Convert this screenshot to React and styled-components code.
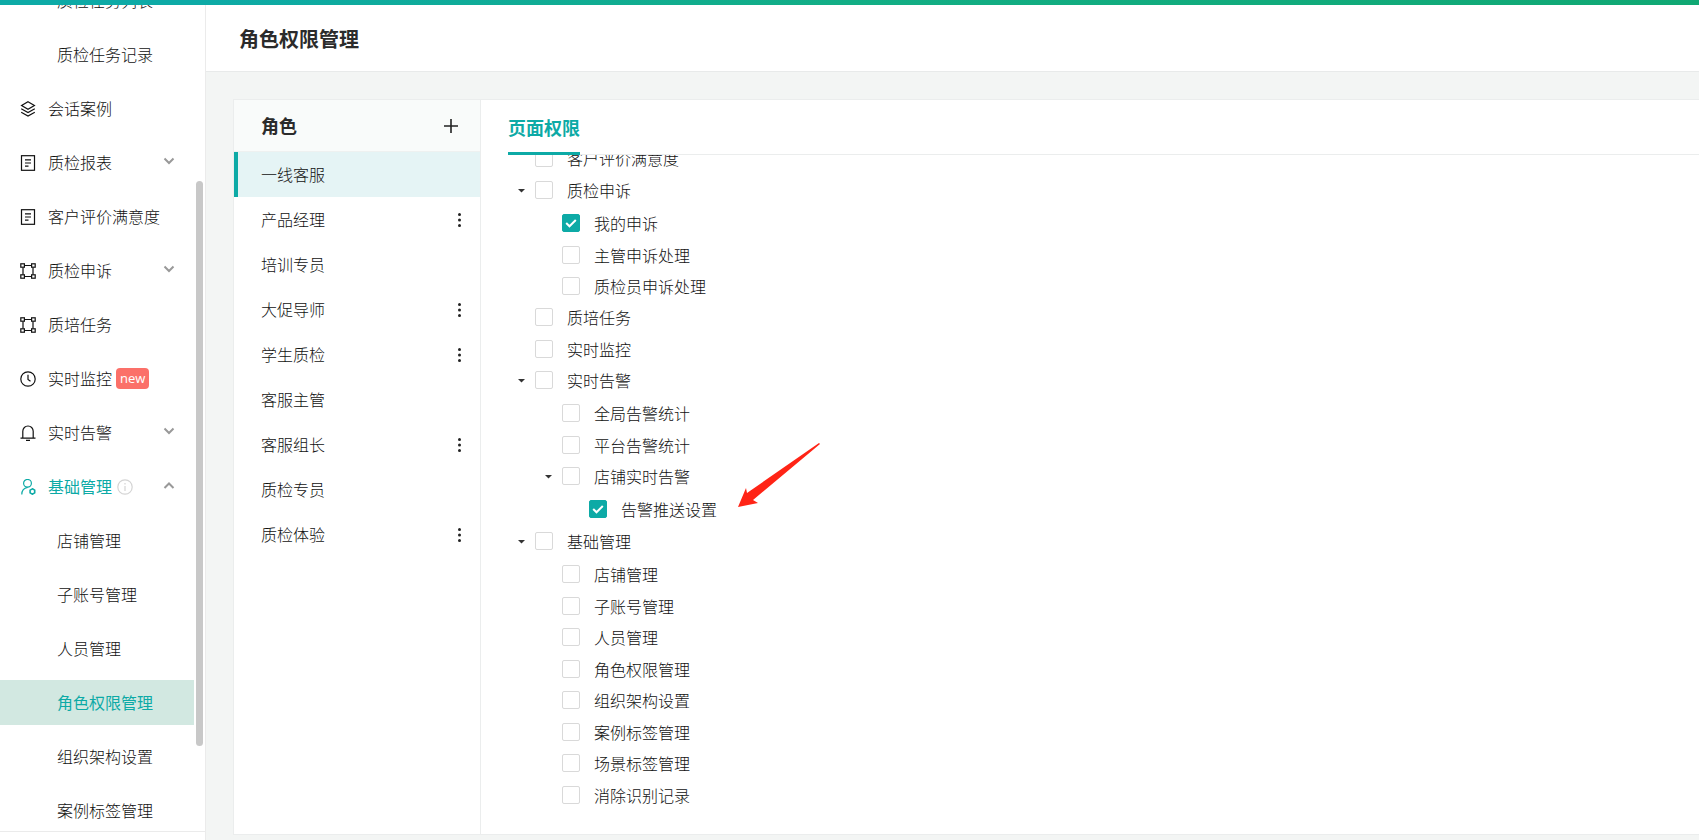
import React, { useState } from 'react';
import styled, { createGlobalStyle } from 'styled-components';

const GlobalStyle = createGlobalStyle`
    * { box-sizing: border-box; }
    body {
        margin: 0;
        background: #f3f5f4;
        color: #111;
        font-family: "Open Sans", "Noto Sans CJK SC", sans-serif;
        font-size: 16px;
        font-weight: 300;
        line-height: 24px;
    }
    ul { list-style: none; margin: 0; padding: 0; }
    button { font: inherit; color: inherit; border: 0; padding: 0; background: none; cursor: pointer; }
    h1, h2 { margin: 0; color: #2b2b2b; }
`;

const Page = styled.div`
    height: 100vh;
    display: flex;
    flex-direction: column;
    overflow: hidden;
`;

const TopBar = styled.div`
    flex: none;
    height: 5px;
    background: linear-gradient(90deg, #0daaa6 12%, #12ae85 50%, #10a873);
`;

const Body = styled.div`
    flex: 1;
    min-height: 0;
    display: flex;
`;

const Sidebar = styled.aside`
    position: relative;
    flex: none;
    width: 206px;
    display: flex;
    flex-direction: column;
    background: #fff;
    border-right: 1px solid #ebebeb;
`;

const Nav = styled.nav`
    flex: 1;
    min-height: 0;
    overflow: hidden;
    ul { margin-top: -27px; }
    li { margin-bottom: 9px; }
`;

const SidebarFoot = styled.div`
    flex: none;
    height: 9px;
    border-top: 1px solid #ebebeb;
`;

const ScrollThumb = styled.div`
    position: absolute;
    top: 176px;
    right: 2px;
    width: 7px;
    height: 565px;
    border-radius: 4px;
    background: #c8c8c8;
`;

const NavLink = styled.a`
    display: flex;
    align-items: center;
    width: 194px;
    height: 45px;
    padding: 0 18px 0 ${props => (props.$sub ? 57 : 20)}px;
    background: ${props => (props.$active ? '#d2e8e1' : 'transparent')};
    color: ${props => (props.$active || props.$open ? '#0daaa6' : 'inherit')};
    font-weight: ${props => (props.$active || props.$open ? 400 : 300)};
    text-decoration: none;
    > svg:first-child { margin-right: 12px; }
`;

const NewBadge = styled.span`
    margin-left: 4px;
    padding: 0 4px;
    border-radius: 4px;
    background: #fb7069;
    color: #fff;
    font-size: 13px;
    font-weight: 400;
    line-height: 21px;
`;

const InfoIcon = styled.svg`
    margin-left: 5px;
`;

const Chevron = styled.svg`
    margin: 0 1px 3px auto;
`;

const Main = styled.main`
    flex: 1;
    min-width: 0;
    display: flex;
    flex-direction: column;
`;

const Header = styled.header`
    flex: none;
    height: 67px;
    padding: 3px 33px 0;
    display: flex;
    align-items: center;
    background: #fff;
    border-bottom: 1px solid #e8eaea;
    h1 { font-size: 20px; line-height: 30px; font-weight: 700; }
`;

const Card = styled.section`
    flex: 1;
    min-height: 0;
    margin: 27px 0 5px 27px;
    display: flex;
    background: #fff;
    border: 1px solid #ebeded;
    border-right: 0;
`;

const Roles = styled.div`
    flex: none;
    width: 247px;
    border-right: 1px solid #ebeded;
`;

const RolesHead = styled.div`
    display: flex;
    align-items: center;
    justify-content: space-between;
    height: 52px;
    padding: 0 22px 0 27px;
    background: #f9fbfa;
    border-bottom: 1px solid #eef1f0;
    h2 { font-size: 18px; font-weight: 700; }
    svg { display: block; }
`;

const Role = styled.li`
    display: flex;
    align-items: center;
    height: 45px;
    padding-right: 18px;
    border-left: 4px solid ${props => (props.$active ? '#0daaa6' : 'transparent')};
    background: ${props => (props.$active ? '#e5f4f5' : 'transparent')};
    svg { display: block; }
`;

const RoleName = styled.button`
    flex: 1;
    height: 45px;
    padding-left: 23px;
    text-align: left;
`;

const Permissions = styled.div`
    flex: 1;
    min-width: 0;
    padding-left: 27px;
    display: flex;
    flex-direction: column;
`;

const Tabs = styled.div`
    flex: none;
    display: flex;
    height: 55px;
    border-bottom: 1px solid #ebeded;
`;

const Tab = styled.button`
    && {
        height: 55px;
        padding-top: 4px;
        border-bottom: 3px solid #0daaa6;
        color: #0daaa6;
        font-size: 18px;
        font-weight: 700;
    }
`;

const TreeView = styled.div`
    flex: 1;
    min-height: 0;
    overflow: hidden;
    > ul { margin-top: -12px; }
`;

const Branch = styled.ul`
    && { padding-left: ${props => (props.$nested ? 27 : 0)}px; }
    && { padding-top: ${props => (props.$nested ? 2 : 0)}px; }
    > li:nth-child(even) { margin-top: 1px; }
`;

const TreeRow = styled.div`
    position: relative;
    display: flex;
    align-items: center;
    height: 31px;
    label { display: flex; align-items: center; gap: 14px; }
`;

const Toggle = styled.button`
    width: 27px;
    height: 24px;
    display: flex;
    align-items: center;
    justify-content: center;
`;

const Spacer = styled.span`
    width: 27px;
`;

const Checkbox = styled.input`
    appearance: none;
    flex: none;
    width: 18px;
    height: 18px;
    margin: 0 0 2px;
    border: 1px solid #d9d9d9;
    border-radius: 2px;
    background: #fff;
    &:checked {
        border-color: #0daaa6;
        background: #0daaa6 url("data:image/svg+xml,%3Csvg xmlns='http://www.w3.org/2000/svg' viewBox='0 0 16 16'%3E%3Cpath d='M3.2 8l3.3 3.3L12.8 5' fill='none' stroke='white' stroke-width='2'/%3E%3C/svg%3E") center / 16px no-repeat;
    }
`;

const Arrow = styled.svg`
    position: absolute;
    left: 175px;
    top: -53px;
`;

const icons = {
    layers: <><path d="M8 .8l6.4 3.7L8 8.2 1.6 4.5z" /><path d="M1.2 7.8L8 11.6l6.8-3.8M1.2 11.2L8 15l6.8-3.8" /></>,
    report: <><rect x="1.5" y=".7" width="13" height="14.6" /><path d="M5 4.8h6M5 8h6M5 11.2h3.5" /></>,
    frame: <><path d="M4.3 2.5h7.4M4.3 13.5h7.4M3 4.5v7M13 4.5v7" /><rect x=".8" y=".8" width="3.6" height="3.4" /><rect x="11.6" y=".8" width="3.6" height="3.4" /><rect x=".8" y="11.8" width="3.6" height="3.4" /><rect x="11.6" y="11.8" width="3.6" height="3.4" /></>,
    clock: <><circle cx="8" cy="8" r="7.2" /><path d="M8 3.8v4.7l2.5 1.8" /></>,
    bell: <><path d="M.5 13.2h15M2.8 13.2V6.2a5.2 5.2 0 0 1 10.4 0v7M6 15.4h4" /></>,
    user: <><circle cx="7.5" cy="4.3" r="3.9" /><path d="M1.8 15.6c0-3.9 2.2-6.6 5.9-7.2" /><path d="M12.4 9.8l2.3 1.3v2.8l-2.3 1.3-2.3-1.3v-2.8z" strokeWidth="1.6" /></>,
};

const Icon = ({ name }) => (
    <svg width="16" height="16" viewBox="0 0 16 16" fill="none" stroke="currentColor" strokeWidth="1.2" aria-hidden="true">
        {icons[name]}
    </svg>
);

const menu = [
    { text: '质检任务列表', sub: true },
    { text: '质检任务记录', sub: true },
    { text: '会话案例', icon: 'layers' },
    { text: '质检报表', icon: 'report', arrow: 'down' },
    { text: '客户评价满意度', icon: 'report' },
    { text: '质检申诉', icon: 'frame', arrow: 'down' },
    { text: '质培任务', icon: 'frame' },
    { text: '实时监控', icon: 'clock', badge: 'new' },
    { text: '实时告警', icon: 'bell', arrow: 'down' },
    { text: '基础管理', icon: 'user', arrow: 'up', info: true, open: true },
    { text: '店铺管理', sub: true },
    { text: '子账号管理', sub: true },
    { text: '人员管理', sub: true },
    { text: '角色权限管理', sub: true, active: true },
    { text: '组织架构设置', sub: true },
    { text: '案例标签管理', sub: true },
];

const roles = [
    { name: '一线客服' },
    { name: '产品经理', more: true },
    { name: '培训专员' },
    { name: '大促导师', more: true },
    { name: '学生质检', more: true },
    { name: '客服主管' },
    { name: '客服组长', more: true },
    { name: '质检专员' },
    { name: '质检体验', more: true },
];

const tree = [
    { text: '客户评价满意度' },
    { text: '质检申诉', children: [
        { text: '我的申诉', checked: true },
        { text: '主管申诉处理' },
        { text: '质检员申诉处理' },
    ] },
    { text: '质培任务' },
    { text: '实时监控' },
    { text: '实时告警', children: [
        { text: '全局告警统计' },
        { text: '平台告警统计' },
        { text: '店铺实时告警', children: [
            { text: '告警推送设置', checked: true, marked: true },
        ] },
    ] },
    { text: '基础管理', children: [
        { text: '店铺管理' },
        { text: '子账号管理' },
        { text: '人员管理' },
        { text: '角色权限管理' },
        { text: '组织架构设置' },
        { text: '案例标签管理' },
        { text: '场景标签管理' },
        { text: '消除识别记录' },
    ] },
];

const TreeNode = ({ node }) => {
    const [open, setOpen] = useState(true);
    return (
        <li>
            <TreeRow>
                {node.children ? (
                    <Toggle aria-label={node.text} aria-expanded={open} onClick={() => setOpen(!open)}>
                        <svg width="7" height="4" viewBox="0 0 7 4"><path d="M0 0h7L3.5 3.6z" fill="#333" /></svg>
                    </Toggle>
                ) : <Spacer />}
                <label>
                    <Checkbox type="checkbox" defaultChecked={node.checked} />
                    {node.text}
                </label>
                {node.marked && (
                    <Arrow width="84" height="68" viewBox="0 0 84 68" aria-hidden="true">
                        <path d="M1 66L9 47l1 5L82 2l1 1-67 56 5 3z" fill="#ff2416" />
                    </Arrow>
                )}
            </TreeRow>
            {node.children && open && <Tree nodes={node.children} nested />}
        </li>
    );
};

const Tree = ({ nodes, nested }) => (
    <Branch $nested={nested}>
        {nodes.map(node => <TreeNode key={node.text} node={node} />)}
    </Branch>
);

const App = () => {
    const [current, setCurrent] = useState('一线客服');
    return (
        <Page>
            <GlobalStyle />
            <TopBar />
            <Body>
                <Sidebar>
                    <Nav>
                        <ul>
                            {menu.map(item => (
                                <li key={item.text}>
                                    <NavLink href="#" $sub={item.sub} $active={item.active} $open={item.open}>
                                        {item.icon && <Icon name={item.icon} />}
                                        <span>{item.text}</span>
                                        {item.badge && <NewBadge>{item.badge}</NewBadge>}
                                        {item.info && (
                                            <InfoIcon width="16" height="16" viewBox="0 0 16 16" fill="none" stroke="#d4d4d4" strokeWidth="1.2">
                                                <circle cx="8" cy="8" r="7.2" />
                                                <path d="M8 7v5M8 4v1.5" />
                                            </InfoIcon>
                                        )}
                                        {item.arrow && (
                                            <Chevron width="12" height="8" viewBox="0 0 12 8" fill="none" stroke="#999" strokeWidth="2">
                                                <path d={item.arrow === 'down' ? 'M1.5 1.5L6 6l4.5-4.5' : 'M1.5 7L6 2.5 10.5 7'} />
                                            </Chevron>
                                        )}
                                    </NavLink>
                                </li>
                            ))}
                        </ul>
                    </Nav>
                    <SidebarFoot />
                    <ScrollThumb />
                </Sidebar>
                <Main>
                    <Header><h1>角色权限管理</h1></Header>
                    <Card>
                        <Roles>
                            <RolesHead>
                                <h2>角色</h2>
                                <button aria-label="添加角色">
                                    <svg width="14" height="14" viewBox="0 0 14 14" stroke="#222" strokeWidth="1.6"><path d="M7 0v14M0 7h14" /></svg>
                                </button>
                            </RolesHead>
                            <ul>
                                {roles.map(role => (
                                    <Role key={role.name} $active={role.name === current}>
                                        <RoleName onClick={() => setCurrent(role.name)}>{role.name}</RoleName>
                                        {role.more && (
                                            <button aria-label="更多">
                                                <svg width="5" height="16" viewBox="0 0 5 16" fill="#222">
                                                    <circle cx="2.5" cy="2.5" r="1.5" />
                                                    <circle cx="2.5" cy="8" r="1.5" />
                                                    <circle cx="2.5" cy="13.5" r="1.5" />
                                                </svg>
                                            </button>
                                        )}
                                    </Role>
                                ))}
                            </ul>
                        </Roles>
                        <Permissions>
                            <Tabs><Tab>页面权限</Tab></Tabs>
                            <TreeView><Tree nodes={tree} /></TreeView>
                        </Permissions>
                    </Card>
                </Main>
            </Body>
        </Page>
    );
};

export default App;
